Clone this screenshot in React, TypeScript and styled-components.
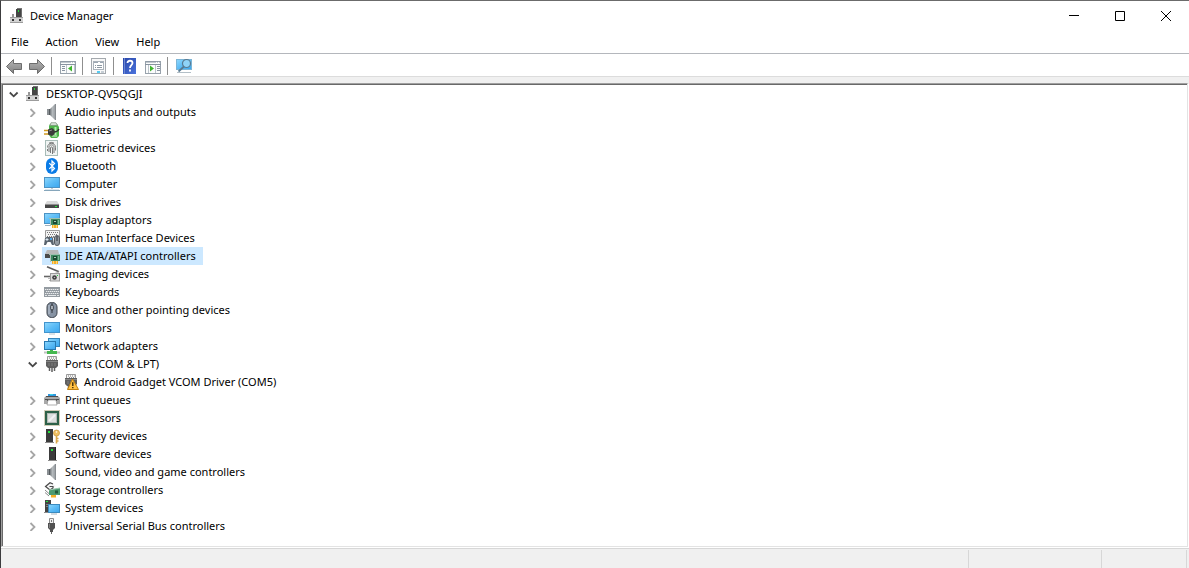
import React, { useState } from "react";
import styled, { createGlobalStyle } from "styled-components";

const Global = createGlobalStyle`
  * { box-sizing: border-box; }
  body { margin: 0; background: #fff; color: #000; font-family: "Segoe UI", "Noto Sans", "Open Sans", sans-serif; font-size: 11px; line-height: 18px; }
  button { font: inherit; color: inherit; background: none; border: 0; padding: 0; margin: 0; }
  ul { list-style: none; margin: 0; padding: 0; }
  svg { display: block; flex: none; }
`;

const Window = styled.div`
  display: flex;
  flex-direction: column;
  min-height: 100vh;
  border-top: 1px solid #6b6b6b;
  border-left: 1px solid #3c3c3e;
`;
const TitleBar = styled.header`
  display: flex;
  align-items: center;
  height: 30px;
  padding-left: 8px;
`;
const Title = styled.h1`
  flex: 1;
  margin: 0 0 0 5px;
  font-size: 11px;
  font-weight: 400;
`;
const CaptionButton = styled.button`
  display: grid;
  place-items: center;
  width: 46px;
  height: 30px;
  &:hover { background: #e5e5e5; }
`;
const MenuBar = styled.nav`
  display: flex;
  gap: 1px;
  height: 23px;
  padding: 1px 2px;
  border-bottom: 1px solid #b4b7bc;
`;
const MenuItem = styled.button`
  padding: 0 8px;
  &:hover { background: #cce8ff; }
`;
const ToolBar = styled.div`
  display: flex;
  align-items: center;
  height: 23px;
  padding: 2px 0 0 5px;
  border-bottom: 1px solid #dcdcdc;
`;
const ToolGroup = styled.div`
  display: flex;
  gap: 7px;
`;
const ToolButton = styled.button`
  display: block;
`;
const Separator = styled.span`
  width: 1px;
  height: 18px;
  margin: 0 8px 0 6px;
  background: #8f8f8f;
`;
const Body = styled.main`
  flex: 1;
  display: flex;
  padding: 6px 1px 1px 0;
  background: linear-gradient(#f0f0f0 7px, #fff 7px);
`;
const Sunken = styled.div`
  flex: 1;
  border: 1px solid;
  border-color: #a0a0a0 #e3e3e3 #e3e3e3 #a0a0a0;
`;
const Tree = styled.ul`
  height: 100%;
  && { padding-bottom: 10px; }
  border-top: 1px solid #696969;
  border-left: 1px solid #696969;
  background: #fff;
`;
const Row = styled.div<{ $level: number }>`
  display: flex;
  align-items: center;
  height: 18px;
  padding-left: ${(p) => 3 + p.$level * 19}px;
`;
const Expander = styled.button`
  width: 16px;
  height: 16px;
  display: grid;
  place-items: center;
`;
const Blank = styled.span`
  width: 16px;
`;
const Label = styled.span<{ $selected?: boolean }>`
  display: flex;
  align-items: center;
  gap: 5px;
  height: 18px;
  padding: 0 7px 0 2px;
  margin-left: 1px;
  white-space: nowrap;
  background: ${(p) => (p.$selected ? "#cce8ff" : "transparent")};
`;
const StatusBar = styled.footer`
  display: grid;
  grid-template-columns: 1fr 133px 85px 2px;
  height: 20px;
  padding-top: 1px;
  background: #f0f0f0;
  border-top: 1px solid #d7d7d7;
`;
const StatusCell = styled.span`
  border-right: 1px solid #d7d7d7;
`;
const HiddenSvg = styled.svg`
  position: absolute;
`;

const Defs = () => (
  <HiddenSvg width="0" height="0" aria-hidden="true">
    <defs>
      <linearGradient id="screen" x1="0" y1="0" x2="1" y2="1">
        <stop offset="0" stopColor="#8fd8fd" />
        <stop offset="0.5" stopColor="#5cbcf6" />
        <stop offset="1" stopColor="#3ba6ee" />
      </linearGradient>
      <linearGradient id="cone" x1="0" y1="0" x2="1" y2="0">
        <stop offset="0" stopColor="#74797d" />
        <stop offset="0.4" stopColor="#b5babd" />
        <stop offset="0.75" stopColor="#a0a5a9" />
        <stop offset="1" stopColor="#7c8084" />
      </linearGradient>
      <linearGradient id="arrow" x1="0" y1="0" x2="0" y2="1">
        <stop offset="0" stopColor="#b4b4b4" />
        <stop offset="1" stopColor="#828282" />
      </linearGradient>
      <linearGradient id="help" x1="0" y1="0" x2="1" y2="1">
        <stop offset="0" stopColor="#2946a8" />
        <stop offset="1" stopColor="#4a72dc" />
      </linearGradient>
    </defs>
  </HiddenSvg>
);

const Card = () => (
  <g>
    <rect x="6" y="6" width="10" height="7" fill="#3f8a62" />
    <path d="M5 6.500h11" stroke="#9ebfae" />
    <path d="M6.500 7v7" stroke="#b4c4bb" />
    <rect x="9" y="8" width="4" height="4" fill="#1d4b33" />
    <path d="M10 9.500h2" stroke="#a7cdb7" />
    <path d="M14.500 8v4" stroke="#7fbb98" />
    <path d="M8 13h6v3H8z" fill="#f5ae25" />
    <path d="M9.500 13v3M12.500 13v3" stroke="#ffe08a" strokeWidth=".8" />
  </g>
);
const Speaker = (
  <>
    <path d="M3 5h3v6H3z" fill="#8b9094" />
    <path d="M5.500 5v6" stroke="#54595d" />
    <path d="M6 5l5-5h1v16h-1l-5-5z" fill="url(#cone)" />
  </>
);
const Connector = (
  <>
    <path d="M3.500 .5h9v5h-9z" fill="#f6f6f6" stroke="#9a9a9a" />
    <path d="M5 2h1M7 2h1M9 2h1M11 2h.700M6 3.700h1M8 3.700h1M10 3.700h1" stroke="#777" />
    <path d="M2 4h12v6l-2 2H4l-2-2z" fill="#5f5f5f" />
    <path d="M2 5.500h12" stroke="#858585" />
    <path d="M5 7v3M8 7v3M11 7v3" stroke="#808080" />
    <path d="M5.500 12v3M8 12v4M10.500 12v3" stroke="#606060" strokeWidth="1.500" />
  </>
);

const icons: Record<string, React.ReactNode> = {
  host: (
    <>
      <path d="M7 1h6v8H7z" fill="#454545" />
      <path d="M8 .5h5" stroke="#777" />
      <path d="M12.500 1v8" stroke="#6d6d6d" />
      <rect x="9" y="2" width="1" height="2" fill="#23e33c" />
      <path d="M3 6h2v3H3z" fill="#969696" />
      <path d="M1 9h13v6H1z" fill="#d2d2d2" />
      <path d="M1 9.500h13M1 14.500h13" stroke="#9c9c9c" />
      <path d="M3 11h2v2H3zM10 11h2v2h-2z" fill="#333" />
    </>
  ),
  audio: Speaker,
  battery: (
    <>
      <path d="M6 2h7l2 3v9l-2 2H7l-2-3V4z" fill="#4fb54b" />
      <path d="M7 .8h5l1.500 2.500H6z" fill="#e6ece6" stroke="#7e927e" strokeWidth=".8" />
      <path d="M11.500 5v8" stroke="#b3efae" strokeWidth="2" />
      <path d="M8 14h5" stroke="#d8efd6" />
      <path d="M0 8.500h5M0 12h5" stroke="#d19a1f" strokeWidth="1.500" />
      <path d="M4 7.500L8 6l2.500 2v4L8 14l-4-1.500z" fill="#3b3b3b" />
      <path d="M5 9l3-1" stroke="#8b8b8b" />
      <path d="M10 10c3 0 4-1 5-3" fill="none" stroke="#333" strokeWidth="1.300" />
    </>
  ),
  finger: (
    <>
      <rect x="1.500" y=".5" width="12" height="15" fill="#f0f4f3" stroke="#a8bcb8" />
      <g fill="none" stroke="#5b5b5b" strokeWidth=".8">
        <path d="M3.500 7.500C3.500 2 11.500 2 11.500 7.500v3M5 12V7.500c0-3.500 5-3.500 5 0V13M6.500 13V8c0-1.500 2-1.500 2 0v6M3.500 9v2M5 3.200c1.500-1 3.500-1 5 0" />
      </g>
    </>
  ),
  bluetooth: (
    <>
      <rect x="2" y="0" width="12" height="16" rx="6" fill="#0a7be6" />
      <path d="M5.300 5.200l5.200 5.300L8 13V3l2.500 2.500-5.200 5.300" fill="none" stroke="#fff" strokeWidth="1.200" />
    </>
  ),
  computer: (
    <>
      <rect x=".5" y="1.500" width="15" height="10" fill="url(#screen)" stroke="#4c93c4" />
      <path d="M7 12h2v1H7z" fill="#c3ccd3" />
      <path d="M0 14.500h16" stroke="#86a6bb" />
      <path d="M1 13.500h14" stroke="#dde7ee" />
    </>
  ),
  disk: (
    <>
      <path d="M3 7h10l2 3H1z" fill="#dadada" />
      <path d="M1 10h14v4H1z" fill="#474747" />
      <path d="M1 10.500h14" stroke="#909090" />
      <rect x="11" y="12" width="2" height="1" fill="#22e83b" />
    </>
  ),
  display: (
    <>
      <rect x=".5" y="1.500" width="15" height="10" fill="url(#screen)" stroke="#4c93c4" />
      <path d="M1 13.500h5" stroke="#9fb0bd" />
      <Card />
    </>
  ),
  hid: (
    <>
      <path d="M1.500 .5h14v7h-14z" fill="#f2f2f2" stroke="#9a9a9a" />
      <path d="M3 2.500h11M4 4.500h10M3 6.500h11" stroke="#777" strokeDasharray="1 1" />
      <path d="M0 15l1-7 2-1h4l2 1 1 7H8l-1.500-3h-3L2 15z" fill="#5a646e" />
      <path d="M3 8v3M1.500 9.500h3" stroke="#d8e5ef" />
      <rect x="6" y="8" width="2" height="2" fill="#4ba6ec" />
      <rect x="10.500" y="5.500" width="5" height="10" rx="2.500" fill="#9299a0" stroke="#55595e" />
      <path d="M13 6v5" stroke="#2f3338" />
    </>
  ),
  ide: (
    <>
      <path d="M3 2h11l1 4H1z" fill="#b9b9b9" />
      <path d="M1 6h14v4H1z" fill="#4a4a4a" />
      <Card />
    </>
  ),
  imaging: (
    <>
      <path d="M3 .8l12 5" stroke="#5b5b5b" strokeWidth="1.500" />
      <path d="M15 6L8 8.500" stroke="#b9b9b9" strokeWidth="1.300" />
      <path d="M0 10.500h7" stroke="#666" strokeWidth="1.600" />
      <path d="M4 12.500h2M5 14.500h2" stroke="#bbb" />
      <rect x="6.500" y="7.500" width="9" height="7.500" fill="#ddd" stroke="#9b9b9b" />
      <circle cx="10.500" cy="11.500" r="2.300" fill="#3d3d3d" />
      <circle cx="10.500" cy="11.500" r=".8" fill="#bbb" />
      <rect x="13" y="9" width="1" height="1" fill="#20d33a" />
    </>
  ),
  keyboard: (
    <>
      <path d="M0 3h16v10H0z" fill="#949ba1" />
      <path d="M1 5.500h14M2 7.500h13M1 9.500h14" stroke="#e9ebed" strokeDasharray="1.400 .6" />
      <path d="M1 11.500h2M4 11.500h8M13 11.500h2" stroke="#e6e9eb" />
    </>
  ),
  mouse: (
    <>
      <rect x="3" y=".5" width="10" height="15" rx="4.500" fill="#8793a3" stroke="#3d434b" />
      <path d="M5 3v9" stroke="#bdc8d5" />
      <path d="M8 1v10" stroke="#30343a" />
      <rect x="6.800" y="3" width="2.400" height="5" rx="1.200" fill="#dce2e8" stroke="#2b2f36" />
    </>
  ),
  monitor: (
    <>
      <rect x=".5" y="2.500" width="15" height="10" fill="url(#screen)" stroke="#4294cd" />
      <path d="M5 14h6" stroke="#b9c5ce" />
    </>
  ),
  network: (
    <>
      <rect x="4.500" y=".5" width="11" height="8" fill="url(#screen)" stroke="#3585ba" />
      <rect x=".5" y="3.500" width="11" height="8" fill="url(#screen)" stroke="#2879b0" />
      <path d="M6 12h3v1h4v3H3v-3h3z" fill="#45b84f" />
      <path d="M0 14.500h3M13 14.500h3" stroke="#c2c2c2" strokeWidth="2" />
    </>
  ),
  port: Connector,
  warning: (
    <>
      {Connector}
      <path d="M9.500 5L15.500 15.500h-11z" fill="#ffc043" stroke="#c0800f" strokeLinejoin="round" />
      <path d="M9.800 8.300v3.700M9.800 13v1.300" stroke="#332100" strokeWidth="1.300" />
    </>
  ),
  printer: (
    <>
      <path d="M4 2h8v3H4z" fill="#2f97dd" />
      <path d="M6 2.500h3" stroke="#37d2e8" />
      <path d="M0 6l2-2h12l2 2v6H0z" fill="#a9a9a9" />
      <path d="M2 4.500h12M1 7.500h14" stroke="#4d4d4d" />
      <path d="M3 8.500h10" stroke="#2f2f2f" />
      <path d="M4 8h8l1 5H3z" fill="#fff" stroke="#8c8c8c" strokeWidth=".7" />
    </>
  ),
  processor: (
    <>
      <rect x=".5" y=".5" width="15" height="15" fill="none" stroke="#a39a70" strokeDasharray="1 1" />
      <rect x="1" y="1" width="14" height="14" fill="#2d6148" />
      <rect x="3.500" y="3.500" width="9" height="9" fill="#dcdfdd" stroke="#b3bbb6" />
      <path d="M5 11l6-6" stroke="#f3f3f3" strokeWidth="2" />
    </>
  ),
  security: (
    <>
      <rect x="2" y="1" width="7" height="13" fill="#3b3b3b" />
      <rect x="4" y="3" width="2" height="2" fill="#23e33c" />
      <path d="M1 14.500h9" stroke="#8c8c8c" />
      <circle cx="12.500" cy="5" r="3" fill="#f2c263" stroke="#c38f35" strokeWidth=".7" />
      <circle cx="12.500" cy="4" r=".8" fill="#fff" />
      <path d="M12.500 8v7.500M13 10.500h1.500M13 13h1.500" stroke="#dca94a" strokeWidth="1.600" />
    </>
  ),
  software: (
    <>
      <rect x="5" y="1" width="7" height="13" fill="#3b3b3b" />
      <path d="M11.500 1v13" stroke="#222" />
      <rect x="7" y="3" width="2" height="2" fill="#23e33c" />
      <path d="M4 14.500h9" stroke="#8c8c8c" />
    </>
  ),
  storage: (
    <>
      <path d="M6 0l6 4-5 4-6-4z" fill="#f4f4f4" />
      <path d="M9 2L6 .7 1.500 4.500 6 8l3-2V4.500H5.500" fill="none" stroke="#4a4a4a" strokeWidth="1.200" />
      <path d="M1 8l5 4.500M1 10.500l4 3.500" stroke="#888" />
      <path d="M5 8l11-2v7H5z" fill="#4d9a70" />
      <path d="M5 8l11-2" stroke="#9bc7ae" />
      <path d="M11 8.500h3v3h-3z" fill="#235a3d" />
      <path d="M7 13h5v2.500H7z" fill="#f5ae25" />
    </>
  ),
  system: (
    <>
      <rect x="1" y="0" width="6" height="12" fill="#444" />
      <path d="M2 4.500h4M2 6.500h4" stroke="#808080" />
      <rect x="2" y="1" width="2" height="1" fill="#23e33c" />
      <rect x="4.500" y="4.500" width="11" height="8" fill="url(#screen)" stroke="#3b8bbf" />
      <path d="M7 14h6" stroke="#a5b6c2" />
      <path d="M0 12.500h4" stroke="#8c8c8c" />
    </>
  ),
  usb: (
    <>
      <path d="M5.500 .5h4v5h-4z" fill="#f0f0f0" stroke="#8a8a8a" />
      <path d="M7.500 2v2" stroke="#777" />
      <path d="M4 5h7v5l-2 2v2H6v-2l-2-2z" fill="#515151" />
      <path d="M5.500 6v4" stroke="#808080" />
      <path d="M7.500 14v2" stroke="#666" />
    </>
  ),
  back: (
    <path d="M.5 8.500L7.500 1.500v4h8v6h-8v4z" fill="url(#arrow)" stroke="#6d6d6d" strokeLinejoin="round" />
  ),
  forward: (
    <path d="M15.500 8.500L8.500 1.500v4h-8v6h8v4z" fill="url(#arrow)" stroke="#6d6d6d" strokeLinejoin="round" />
  ),
  consoleTree: (
    <>
      <rect x=".5" y="3.500" width="15" height="12" fill="#fbfcfc" stroke="#98a2ac" />
      <path d="M1 4h10M12 4h1M14 4h1" stroke="#8893a0" />
      <path d="M0 6.500h16" stroke="#8893a0" />
      <path d="M6.500 7v8M14.500 7v8" stroke="#bcc4cb" />
      <path d="M2 8.500h3M2 10.500h3M2 12.500h3" stroke="#8893a0" />
      <path d="M12 7.500v6L8 10.500z" fill="#3fb52e" />
    </>
  ),
  actionPane: (
    <>
      <rect x=".5" y="3.500" width="15" height="12" fill="#fbfcfc" stroke="#98a2ac" />
      <path d="M1 4h10M12 4h1M14 4h1" stroke="#8893a0" />
      <path d="M0 6.500h16" stroke="#8893a0" />
      <path d="M3.500 7v8M10.500 7v8" stroke="#bcc4cb" />
      <path d="M12 8.500h3M12 10.500h3M12 12.500h3" stroke="#8893a0" />
      <path d="M5 7.500v6L9 10.500z" fill="#3fb52e" />
    </>
  ),
  properties: (
    <>
      <rect x=".5" y=".5" width="14" height="15" fill="#f8f8f8" stroke="#a4a9ae" />
      <rect x="2.500" y="3.500" width="10" height="8" fill="#fff" stroke="#aab2ba" />
      <path d="M3 4.500h4M9 4.500h3" stroke="#9ba6b1" />
      <path d="M4 7.500h1M6 7.500h5M4 9.500h1M6 9.500h5" stroke="#8c97a1" />
      <path d="M6 14h3" stroke="#2cc0f0" strokeWidth="1.600" />
      <path d="M10 14h3" stroke="#b9c4cc" strokeWidth="1.600" />
    </>
  ),
  help: (
    <>
      <rect x="1" y="0" width="13" height="16" fill="url(#help)" />
      <path d="M2.500 0v16" stroke="#6c87d2" />
      <path d="M5.500 5c0-3 5-3 5 0 0 2-2.500 2.300-2.500 5M8 11.500v2" fill="none" stroke="#fff" strokeWidth="1.800" />
    </>
  ),
  scan: (
    <>
      <rect x=".5" y="1.500" width="15" height="10" fill="url(#screen)" stroke="#7db5d6" />
      <path d="M1 14.500h14" stroke="#b3bfc7" />
      <circle cx="10.500" cy="5.500" r="4" fill="#8fd3f8" stroke="#587a92" strokeWidth="1.200" />
      <path d="M8 8.500L2.500 13.500" stroke="#587a92" strokeWidth="1.800" />
    </>
  ),
};

const Icon = ({ name }: { name: string }) => (
  <svg width="16" height="16" viewBox="0 0 16 16" aria-hidden="true">{icons[name]}</svg>
);

const Chevron = ({ open }: { open: boolean }) => (
  <svg width="10" height="10" viewBox="0 0 10 10" fill="none" strokeWidth="1.800" aria-hidden="true">
    {open ? <path d="M.8 3.500l3.900 3.800 3.900-3.800" stroke="#484848" /> : <path d="M2.500 2l4 4-4 4" stroke="#a6a6a6" />}
  </svg>
);

type Device = { icon: string; name: string; children?: Device[] };
const leaf = (icon: string, name: string): Device => ({ icon, name });

const devices: Device[] = [
  leaf("audio", "Audio inputs and outputs"),
  leaf("battery", "Batteries"),
  leaf("finger", "Biometric devices"),
  leaf("bluetooth", "Bluetooth"),
  leaf("computer", "Computer"),
  leaf("disk", "Disk drives"),
  leaf("display", "Display adaptors"),
  leaf("hid", "Human Interface Devices"),
  leaf("ide", "IDE ATA/ATAPI controllers"),
  leaf("imaging", "Imaging devices"),
  leaf("keyboard", "Keyboards"),
  leaf("mouse", "Mice and other pointing devices"),
  leaf("monitor", "Monitors"),
  leaf("network", "Network adapters"),
  { icon: "port", name: "Ports (COM & LPT)", children: [leaf("warning", "Android Gadget VCOM Driver (COM5)")] },
  leaf("printer", "Print queues"),
  leaf("processor", "Processors"),
  leaf("security", "Security devices"),
  leaf("software", "Software devices"),
  leaf("audio", "Sound, video and game controllers"),
  leaf("storage", "Storage controllers"),
  leaf("system", "System devices"),
  leaf("usb", "Universal Serial Bus controllers"),
];

type NodeProps = { device: Device; level: number; selected: string; onSelect: (name: string) => void };

const TreeNode = ({ device, level, selected, onSelect }: NodeProps) => {
  const [open, setOpen] = useState(Boolean(device.children));
  return (
    <li role="treeitem" aria-expanded={level < 2 ? open : undefined} aria-selected={selected === device.name}>
      <Row $level={level}>
        {level < 2 ? (
          <Expander aria-label={`Toggle ${device.name}`} onClick={() => setOpen(!open)}>
            <Chevron open={open} />
          </Expander>
        ) : (
          <Blank />
        )}
        <Label $selected={selected === device.name} onClick={() => onSelect(device.name)}>
          <Icon name={device.icon} />
          {device.name}
        </Label>
      </Row>
      {open && device.children && (
        <ul role="group">
          {device.children.map((child) => (
            <TreeNode key={child.name} device={child} level={level + 1} selected={selected} onSelect={onSelect} />
          ))}
        </ul>
      )}
    </li>
  );
};

const tools: [string, string][][] = [
  [["back", "Back"], ["forward", "Forward"]],
  [["consoleTree", "Show or hide console tree"]],
  [["properties", "Properties"]],
  [["help", "Help"], ["actionPane", "Show or hide action pane"]],
  [["scan", "Scan for hardware changes"]],
];

export default function App() {
  const [selected, setSelected] = useState("IDE ATA/ATAPI controllers");
  return (
    <Window>
      <Global />
      <Defs />
      <TitleBar>
        <Icon name="host" />
        <Title>Device Manager</Title>
        <CaptionButton aria-label="Minimize">
          <svg width="10" height="10"><path d="M0 4.500h10" stroke="#000" /></svg>
        </CaptionButton>
        <CaptionButton aria-label="Maximize">
          <svg width="10" height="10"><path d="M.5 .5h9v9h-9z" fill="none" stroke="#000" /></svg>
        </CaptionButton>
        <CaptionButton aria-label="Close">
          <svg width="10" height="10"><path d="M0 0l10 10M10 0L0 10" stroke="#000" /></svg>
        </CaptionButton>
      </TitleBar>
      <MenuBar>
        {["File", "Action", "View", "Help"].map((item) => (
          <MenuItem key={item}>{item}</MenuItem>
        ))}
      </MenuBar>
      <ToolBar role="toolbar">
        {tools.map((group, index) => (
          <React.Fragment key={index}>
            {index > 0 && <Separator />}
            <ToolGroup>
              {group.map(([icon, label]) => (
                <ToolButton key={icon} aria-label={label}><Icon name={icon} /></ToolButton>
              ))}
            </ToolGroup>
          </React.Fragment>
        ))}
      </ToolBar>
      <Body>
        <Sunken>
          <Tree role="tree">
            <TreeNode
              device={{ icon: "host", name: "DESKTOP-QV5QGJI", children: devices }}
              level={0}
              selected={selected}
              onSelect={setSelected}
            />
          </Tree>
        </Sunken>
      </Body>
      <StatusBar>
        <StatusCell />
        <StatusCell />
        <StatusCell />
      </StatusBar>
    </Window>
  );
}
